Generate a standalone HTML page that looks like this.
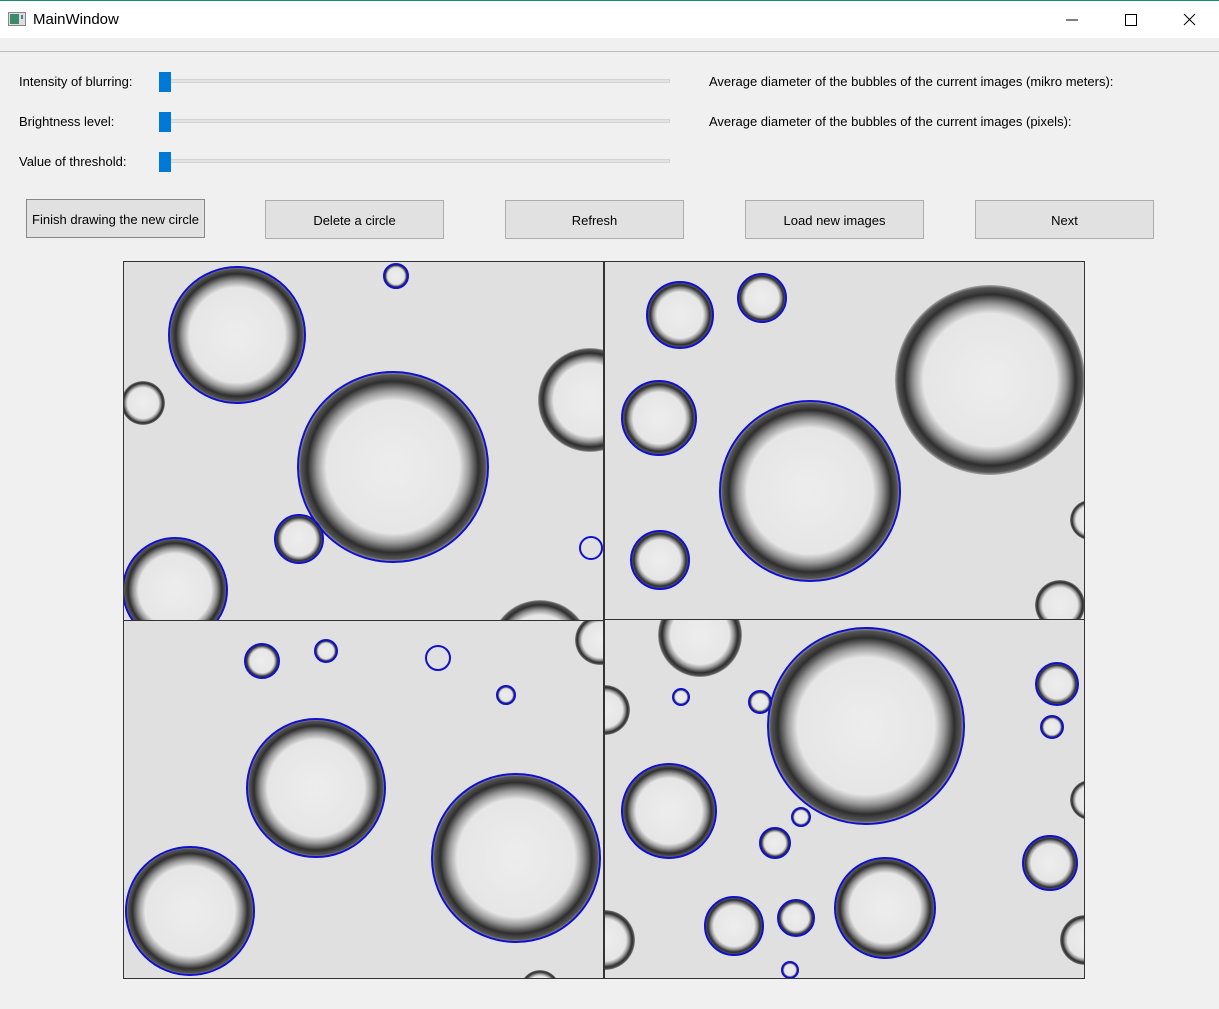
<!DOCTYPE html>
<html><head><meta charset="utf-8"><style>
body{margin:0;width:1219px;height:1009px;background:#f0f0f0;font-family:"Liberation Sans",sans-serif;font-size:13px;color:#000;position:relative;overflow:hidden}
.title{position:absolute;left:0;top:0;width:1219px;height:38px;background:#fff;border-top:1px solid #1a8a7a;box-sizing:border-box}
.title span{position:absolute;left:33px;top:10px;font-size:15px}
.tb{position:absolute;top:51px;left:0;width:1219px;border-top:1px solid #bdbdbd}
.lbl{position:absolute;font-size:13px}
.track{position:absolute;left:160px;width:510px;height:4px;background:#e2e2e2;border:1px solid #d4d4d4;box-sizing:border-box}
.handle{position:absolute;left:159px;width:12px;height:20px;background:#0078d7}
.btn{position:absolute;top:200px;width:179px;height:39px;box-sizing:border-box;border:1px solid #adadad;background:#e1e1e1;text-align:center;line-height:40px;font-size:13px}
</style></head><body>
<div class="title">
<svg style="position:absolute;left:8px;top:11px" width="18" height="14"><rect x="0.5" y="0.5" width="17" height="13" fill="#ddd" stroke="#888"/><rect x="2" y="2" width="9" height="10" fill="#3d8a6a"/><rect x="13" y="3" width="2" height="4" fill="#4a7ab0"/></svg>
<span>MainWindow</span>
<svg style="position:absolute;left:1060px;top:10px" width="140" height="20"><line x1="6" y1="9" x2="18" y2="9" stroke="#000"/><rect x="65.5" y="3.5" width="11" height="11" fill="none" stroke="#000"/><path d="M124 3 L135 14 M135 3 L124 14" stroke="#000"/></svg>
</div>
<div class="tb"></div>
<div class="lbl" style="left:19px;top:74px">Intensity of blurring:</div>
<div class="lbl" style="left:19px;top:114px">Brightness level:</div>
<div class="lbl" style="left:19px;top:154px">Value of threshold:</div>
<div class="track" style="top:79px"></div><div class="handle" style="top:72px"></div>
<div class="track" style="top:119px"></div><div class="handle" style="top:112px"></div>
<div class="track" style="top:159px"></div><div class="handle" style="top:152px"></div>
<div class="lbl" style="left:709px;top:74px">Average diameter of the bubbles of the current images (mikro meters):</div>
<div class="lbl" style="left:709px;top:114px">Average diameter of the bubbles of the current images (pixels):</div>
<div class="btn" style="left:26px;top:199px;border-color:#888">Finish drawing the new circle</div>
<div class="btn" style="left:265px">Delete a circle</div>
<div class="btn" style="left:505px">Refresh</div>
<div class="btn" style="left:745px">Load new images</div>
<div class="btn" style="left:975px">Next</div>
<svg style="position:absolute;left:0;top:0" width="1219" height="1009">
<defs>
<radialGradient id="b"><stop offset="0" stop-color="#ededed"/><stop offset="0.7" stop-color="#e6e6e6"/><stop offset="0.8" stop-color="#999"/><stop offset="0.9" stop-color="#2e2e2e"/><stop offset="0.97" stop-color="#555"/><stop offset="1" stop-color="#aaa"/></radialGradient>
<clipPath id="p1"><rect x="123" y="261" width="480" height="359"/></clipPath>
<clipPath id="p2"><rect x="604" y="261" width="480" height="358"/></clipPath>
<clipPath id="p3"><rect x="123" y="620" width="480" height="358"/></clipPath>
<clipPath id="p4"><rect x="604" y="619" width="481" height="360"/></clipPath>
</defs>
<rect x="123" y="261" width="962" height="718" fill="#e0e0e0"/>
<g fill="url(#b)">
<g clip-path="url(#p1)">
<circle cx="590" cy="400" r="52"/><circle cx="143" cy="403" r="22"/><circle cx="540" cy="650" r="50"/>
<circle cx="237" cy="335" r="68"/><circle cx="393" cy="467" r="95"/><circle cx="299" cy="539" r="24"/><circle cx="396" cy="276" r="12"/><circle cx="175" cy="590" r="52"/>
<g fill="none" stroke="#1010d0" stroke-width="2"><circle cx="237" cy="335" r="68"/><circle cx="393" cy="467" r="95"/><circle cx="299" cy="539" r="24"/><circle cx="396" cy="276" r="12"/><circle cx="591" cy="548" r="11"/><circle cx="175" cy="590" r="52"/></g>
</g>
<g clip-path="url(#p2)">
<circle cx="990" cy="380" r="95"/><circle cx="1090" cy="520" r="20"/><circle cx="1060" cy="605" r="25"/>
<circle cx="680" cy="315" r="33"/><circle cx="762" cy="298" r="24"/><circle cx="659" cy="418" r="37"/><circle cx="810" cy="491" r="90"/><circle cx="660" cy="560" r="29"/>
<g fill="none" stroke="#1010d0" stroke-width="2"><circle cx="680" cy="315" r="33"/><circle cx="762" cy="298" r="24"/><circle cx="659" cy="418" r="37"/><circle cx="810" cy="491" r="90"/><circle cx="660" cy="560" r="29"/></g>
</g>
<g clip-path="url(#p3)">
<circle cx="600" cy="640" r="25"/><circle cx="540" cy="990" r="20"/>
<circle cx="262" cy="661" r="17"/><circle cx="326" cy="651" r="11"/><circle cx="506" cy="695" r="9"/><circle cx="316" cy="788" r="69"/><circle cx="516" cy="858" r="84"/><circle cx="190" cy="911" r="64"/>
<g fill="none" stroke="#1010d0" stroke-width="2"><circle cx="262" cy="661" r="17"/><circle cx="326" cy="651" r="11"/><circle cx="438" cy="658" r="12"/><circle cx="506" cy="695" r="9"/><circle cx="316" cy="788" r="69"/><circle cx="516" cy="858" r="84"/><circle cx="190" cy="911" r="64"/></g>
</g>
<g clip-path="url(#p4)">
<circle cx="700" cy="635" r="42"/><circle cx="605" cy="710" r="25"/><circle cx="1090" cy="800" r="20"/><circle cx="605" cy="940" r="30"/><circle cx="1085" cy="940" r="25"/>
<circle cx="866" cy="726" r="98"/><circle cx="669" cy="811" r="47"/><circle cx="885" cy="908" r="50"/><circle cx="734" cy="926" r="29"/><circle cx="796" cy="918" r="18"/><circle cx="775" cy="843" r="15"/><circle cx="801" cy="817" r="9"/><circle cx="760" cy="702" r="11"/><circle cx="681" cy="697" r="8"/><circle cx="1057" cy="684" r="21"/><circle cx="1052" cy="727" r="11"/><circle cx="1050" cy="863" r="27"/><circle cx="790" cy="970" r="8"/>
<g fill="none" stroke="#1010d0" stroke-width="2"><circle cx="866" cy="726" r="98"/><circle cx="669" cy="811" r="47"/><circle cx="885" cy="908" r="50"/><circle cx="734" cy="926" r="29"/><circle cx="796" cy="918" r="18"/><circle cx="775" cy="843" r="15"/><circle cx="801" cy="817" r="9"/><circle cx="760" cy="702" r="11"/><circle cx="681" cy="697" r="8"/><circle cx="1057" cy="684" r="21"/><circle cx="1052" cy="727" r="11"/><circle cx="1050" cy="863" r="27"/><circle cx="790" cy="970" r="8"/></g>
</g>
</g>
<g fill="none" stroke="#333" stroke-width="1"><rect x="123.5" y="261.5" width="480" height="359"/><rect x="604.5" y="261.5" width="480" height="358"/><rect x="123.5" y="620.5" width="480" height="358"/><rect x="604.5" y="619.5" width="480" height="359"/></g>
</svg>
</body></html>
